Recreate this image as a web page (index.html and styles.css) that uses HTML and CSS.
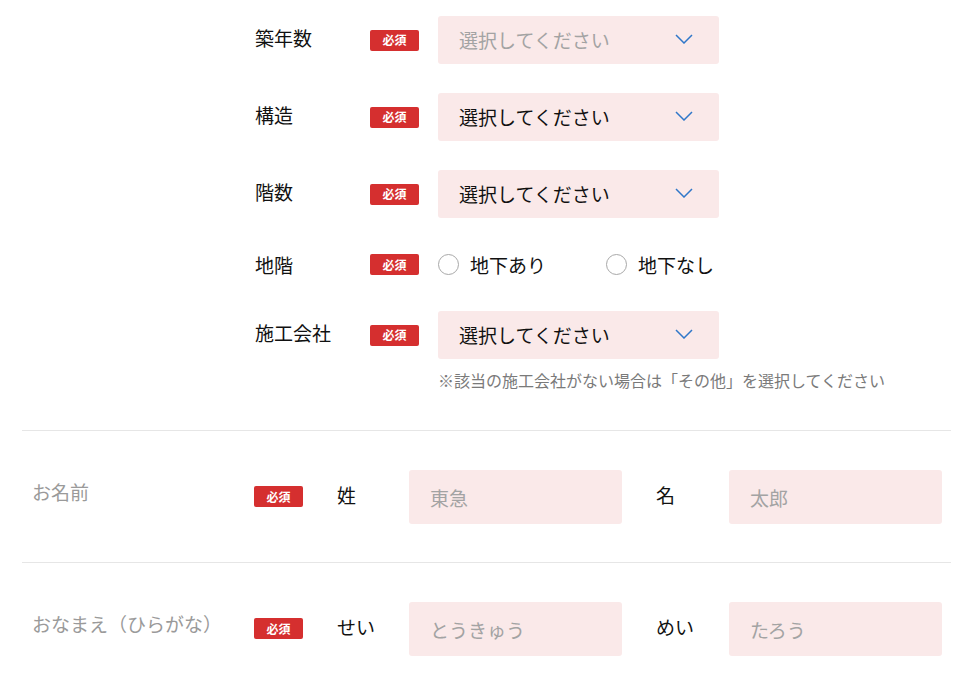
FILE: index.html
```html
<!DOCTYPE html>
<html lang="ja">
<head>
<meta charset="utf-8">
<title>フォーム</title>
<link rel="stylesheet" href="styles.css">
</head>
<body>
<div class="form">
  <section class="section section-top">
    <div class="section-head"></div>
    <div class="section-body">
      <div class="fields">
        <div class="field">
          <div class="field-label">築年数</div>
          <span class="badge">必須</span>
          <div class="select is-empty">
            <span class="select-text">選択してください</span>
            <svg class="chev" width="18" height="10" viewBox="0 0 18 10"><path d="M1 1 L9 9 L17 1" fill="none" stroke="#2f77c9" stroke-width="1.5"/></svg>
          </div>
        </div>
        <div class="field">
          <div class="field-label">構造</div>
          <span class="badge">必須</span>
          <div class="select">
            <span class="select-text">選択してください</span>
            <svg class="chev" width="18" height="10" viewBox="0 0 18 10"><path d="M1 1 L9 9 L17 1" fill="none" stroke="#2f77c9" stroke-width="1.5"/></svg>
          </div>
        </div>
        <div class="field">
          <div class="field-label">階数</div>
          <span class="badge">必須</span>
          <div class="select">
            <span class="select-text">選択してください</span>
            <svg class="chev" width="18" height="10" viewBox="0 0 18 10"><path d="M1 1 L9 9 L17 1" fill="none" stroke="#2f77c9" stroke-width="1.5"/></svg>
          </div>
        </div>
        <div class="field field-radio">
          <div class="field-label label-center">地階</div>
          <span class="badge">必須</span>
          <div class="radios">
            <label class="radio"><span class="radio-circle"></span><span class="radio-text">地下あり</span></label>
            <label class="radio"><span class="radio-circle"></span><span class="radio-text">地下なし</span></label>
          </div>
        </div>
        <div class="field">
          <div class="field-label">施工会社</div>
          <span class="badge">必須</span>
          <div class="select">
            <span class="select-text">選択してください</span>
            <svg class="chev" width="18" height="10" viewBox="0 0 18 10"><path d="M1 1 L9 9 L17 1" fill="none" stroke="#2f77c9" stroke-width="1.5"/></svg>
          </div>
        </div>
      </div>
      <p class="note">※該当の施工会社がない場合は「その他」を選択してください</p>
    </div>
  </section>

  <section class="section section-name">
    <div class="section-head">お名前</div>
    <div class="section-body name-row">
      <span class="badge badge-name">必須</span>
      <span class="sub-label">姓</span>
      <input class="text-input" type="text" placeholder="東急">
      <span class="sub-label sub-label-2">名</span>
      <input class="text-input" type="text" placeholder="太郎">
    </div>
  </section>

  <section class="section section-name section-last">
    <div class="section-head">おなまえ（ひらがな）</div>
    <div class="section-body name-row">
      <span class="badge badge-name">必須</span>
      <span class="sub-label">せい</span>
      <input class="text-input" type="text" placeholder="とうきゅう">
      <span class="sub-label sub-label-2">めい</span>
      <input class="text-input" type="text" placeholder="たろう">
    </div>
  </section>
</div>
</body>
</html>
```

FILE: styles.css
```css
* {
  box-sizing: border-box;
}

body {
  margin: 0;
  background: #ffffff;
  color: #111111;
  font-family: "Noto Sans CJK JP", "Noto Sans", sans-serif;
  font-size: 19px;
}

.form {
  width: 929px;
  margin-left: 22px;
}

.section {
  display: grid;
  grid-template-columns: 232px 1fr;
  border-bottom: 1px solid #e6e6e6;
}

.section-last {
  border-bottom: none;
}

.section-top {
  padding: 16px 0 38px;
}

.section-name {
  padding: 39px 0 38px;
  align-items: center;
}

.section-head {
  padding-left: 10px;
  color: #9a9a9a;
  font-size: 19px;
  line-height: 28px;
  margin-bottom: 11px;
}

.fields {
  display: flex;
  flex-direction: column;
  gap: 29px;
}

.field {
  display: flex;
  align-items: center;
  height: 48px;
}

.field-radio {
  height: 35px;
}

.field-label {
  width: 116px;
  padding-left: 1px;
  line-height: 28px;
  margin-bottom: 4px;
}

.label-center {
  margin-bottom: 0;
}

.badge {
  display: flex;
  align-items: center;
  justify-content: center;
  width: 49px;
  height: 21px;
  margin-right: 19px;
  background: #d52f2f;
  color: #ffffff;
  border-radius: 2px;
  font-size: 12px;
  font-weight: 700;
  line-height: 1;
  flex-shrink: 0;
}

.select {
  display: flex;
  align-items: center;
  width: 281px;
  height: 48px;
  padding-left: 21px;
  padding-right: 26px;
  background: #fae9e9;
  border-radius: 3px;
}

.select-text {
  line-height: 28px;
  color: #111111;
}

.is-empty .select-text {
  color: #a3a3a3;
}

.chev {
  margin-left: auto;
  margin-bottom: 3px;
}

.radios {
  display: flex;
  gap: 60px;
}

.radio {
  display: flex;
  align-items: center;
  gap: 11px;
}

.radio-circle {
  width: 21px;
  height: 21px;
  border: 1px solid #a8a8a8;
  border-radius: 50%;
  background: #ffffff;
}

.radio-text {
  line-height: 28px;
}

.note {
  margin: 9px 0 0 184px;
  font-size: 16px;
  line-height: 24px;
  color: #7a7a7a;
}

.name-row {
  display: flex;
  align-items: center;
}

.badge-name {
  margin-right: 34px;
  margin-left: 0;
  margin-top: -1px;
}

.sub-label {
  width: 72px;
  line-height: 28px;
  margin-bottom: 4px;
}

.sub-label-2 {
  width: 73px;
  margin-left: 34px;
}

.text-input {
  width: 213px;
  height: 54px;
  padding: 0 21px;
  border: none;
  border-radius: 3px;
  background: #fae9e9;
  font-family: inherit;
  font-size: 19px;
  color: #111111;
  outline: none;
}

.text-input::placeholder {
  color: #a3a3a3;
}
```
